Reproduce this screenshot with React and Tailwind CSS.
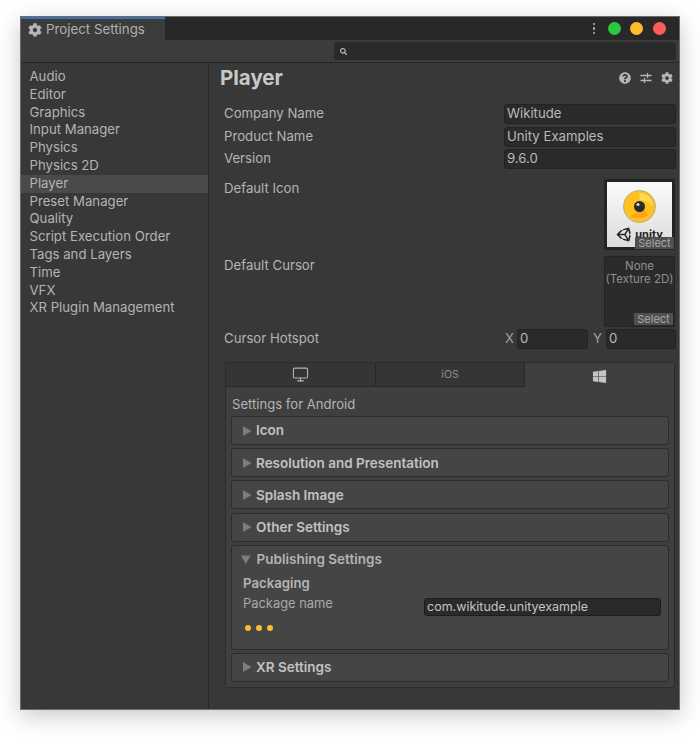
// App.jsx
import React from "react";
import { FaCog, FaQuestionCircle, FaSearch, FaWindows, FaUnity } from "react-icons/fa";
import { Monitor } from "lucide-react";

const sidebarItems = [
  "Audio",
  "Editor",
  "Graphics",
  "Input Manager",
  "Physics",
  "Physics 2D",
  "Player",
  "Preset Manager",
  "Quality",
  "Script Execution Order",
  "Tags and Layers",
  "Time",
  "VFX",
  "XR Plugin Management",
];

function Triangle({ open }) {
  return (
    <svg width="10" height="10" viewBox="0 0 10 10" className="mr-[4px] shrink-0">
      {open ? <path d="M0 1.5h9.5L4.75 10z" fill="#7d7d7d" /> : <path d="M1 0l8.5 5L1 10z" fill="#7d7d7d" />}
    </svg>
  );
}

function Section({ title }) {
  return (
    <div className="flex h-[29px] items-center rounded-[3px] border border-[#2c2c2c] bg-[#454545] pl-[10px]">
      <Triangle />
      <span className="text-[13.5px] font-semibold text-[#c2c2c2]">{title}</span>
    </div>
  );
}

function Field({ label, value }) {
  return (
    <div className="flex h-[22.5px] items-center">
      <span className="w-[284px] pl-[4px] text-[13.2px] text-[#b4b4b4]">{label}</span>
      <div className="flex h-[20px] w-[172px] items-center rounded-[3px] border border-[#232323] bg-[#2a2a2a] pl-[2px] text-[13.2px] text-[#b9b9b9]">
        {value}
      </div>
    </div>
  );
}

function SelectTag() {
  return (
    <div className="absolute right-[1px] bottom-[1px] flex h-[12px] w-[39px] items-center justify-center bg-[#505050] text-[11px] text-[#a8a8a8]">
      Select
    </div>
  );
}

function IconPreview() {
  return (
    <div className="relative h-[71px] w-[71px] rounded-[2px] bg-[#242424] p-[3px]">
      <div className="flex h-full w-full flex-col items-center overflow-hidden bg-gradient-to-b from-[#fafafa] to-[#dcdcdc] pt-[8px]">
        <svg width="33" height="33" viewBox="0 0 33 33" className="shrink-0">
          <circle cx="16.5" cy="16.5" r="16" fill="#ffc21c" stroke="#b8ab8a" />
          <path d="M16.5 3A13.5 13.5 0 0 1 30 16.5C26 12 22 10 16.5 10z" fill="#ffd95a" />
          <path d="M7 26c4 3 14 3 18-1-2-3-4-5-6-6-3 3-8 5-12 7z" fill="#f9a51a" />
          <circle cx="16.5" cy="16.5" r="5.5" fill="#2b2b2b" />
          <circle cx="15" cy="14.5" r="1.6" fill="#d9d9d9" />
        </svg>
        <div className="mt-[3px] flex h-[16px] items-center gap-[2px] text-[11px] leading-none font-bold text-[#222222]">
          <FaUnity className="text-[17px] text-[#222222]" />
          <span>unity</span>
        </div>
      </div>
      <SelectTag />
    </div>
  );
}

function CursorPreview() {
  return (
    <div className="relative h-[71px] w-[71px] rounded-[2px] border border-[#232323] bg-[#2b2b2b] pt-[3px] text-center text-[11.5px] leading-[13px] text-[#8f8f8f]">
      None
      <br />
      (Texture 2D)
      <SelectTag />
    </div>
  );
}

function SmallInput({ value, width }) {
  return (
    <div className={`flex h-[20px] items-center rounded-[3px] border border-[#232323] bg-[#2a2a2a] pl-[2px] text-[13.2px] text-[#b9b9b9] ${width}`}>
      {value}
    </div>
  );
}

export default function App() {
  return (
    <div className="min-h-[742px] bg-white pt-[16px] pl-[20px] [font-family:Inter,sans-serif]">
      <div className="flex h-[694px] w-[660px] flex-col border border-[#6b6b6b] bg-[#383838] shadow-[0_6px_22px_rgba(0,0,0,0.22)]">
        {/* title bar */}
        <div className="flex h-[23px] shrink-0 items-stretch bg-[#282828]">
          <div className="flex w-[144px] items-center gap-[4px] border-t-2 border-[#3a72b0] bg-[#3c3c3c] pt-[1px] pl-[7px] text-[13.3px] text-[#b0b0b0]">
            <FaCog className="text-[14px] text-[#b5b5b5]" />
            Project Settings
          </div>
          <div className="ml-auto flex items-center pr-[13px]">
            <div className="mr-[13px] flex flex-col gap-[2px]">
              <span className="h-[2.5px] w-[2.5px] rounded-full bg-[#b0b0b0]" />
              <span className="h-[2.5px] w-[2.5px] rounded-full bg-[#b0b0b0]" />
              <span className="h-[2.5px] w-[2.5px] rounded-full bg-[#b0b0b0]" />
            </div>
            <span className="h-[13px] w-[13px] rounded-full bg-[#2bc840]" />
            <span className="ml-[9px] h-[13px] w-[13px] rounded-full bg-[#fdbc2c]" />
            <span className="ml-[10px] h-[13px] w-[13px] rounded-full bg-[#fc5b57]" />
          </div>
        </div>

        {/* toolbar */}
        <div className="flex h-[23px] shrink-0 items-center justify-end border-b border-[#252525] bg-[#3c3c3c] pr-[3px]">
          <div className="flex h-[18px] w-[342px] items-center rounded-[3px] bg-[#2a2a2a] pl-[6px]">
            <FaSearch className="text-[7px] text-[#c4c4c4]" />
          </div>
        </div>

        <div className="flex min-h-0 flex-1">
          {/* sidebar */}
          <div className="w-[188px] shrink-0 border-r border-[#252525] pt-[5px]">
            {sidebarItems.map((item) => (
              <div
                key={item}
                className={`flex h-[17.8px] items-center pl-[8.5px] text-[13.2px] text-[#b4b4b4] ${item === "Player" ? "bg-[#4a4a4a]" : ""}`}
              >
                {item}
              </div>
            ))}
          </div>

          {/* main panel */}
          <div className="min-w-0 flex-1 pr-[3px] pl-[11px]">
            <div className="flex h-[30px] items-center justify-between pr-[3px]">
              <h1 className="text-[20.5px] font-bold text-[#c8c8c8]">Player</h1>
              <div className="flex items-center gap-[9px] text-[#b5b5b5]">
                <FaQuestionCircle className="text-[12px]" />
                <svg width="12" height="12" viewBox="0 0 12 12" fill="none" stroke="#b5b5b5" strokeWidth="1.3">
                  <path d="M0.5 3.5h11M0.5 8.5h11" />
                  <path d="M7.5 1v5M4.5 6v5" />
                </svg>
                <FaCog className="text-[12px]" />
              </div>
            </div>

            <div className="mt-[10px]">
              <Field label="Company Name" value="Wikitude" />
              <Field label="Product Name" value="Unity Examples" />
              <Field label="Version" value="9.6.0" />
            </div>

            <div className="mt-[8.5px] flex h-[71px] justify-between pr-[1px]">
              <span className="pl-[4px] text-[13.2px] text-[#b4b4b4]">Default Icon</span>
              <IconPreview />
            </div>
            <div className="mt-[6px] flex h-[71px] justify-between pr-[1px]">
              <span className="pl-[4px] text-[13.2px] text-[#b4b4b4]">Default Cursor</span>
              <CursorPreview />
            </div>

            <div className="mt-[2px] flex h-[20px] items-center text-[13.2px] text-[#b4b4b4]">
              <span className="w-[285px] pl-[4px]">Cursor Hotspot</span>
              <span className="w-[12px] text-[#a0a0a0]">X</span>
              <SmallInput value="0" width="w-[71px]" />
              <span className="ml-[5px] w-[13px] text-[#a0a0a0]">Y</span>
              <SmallInput value="0" width="w-[70px]" />
            </div>

            {/* platform tabs */}
            <div className="mt-[13px] ml-[5px] w-[450px] rounded-[2px] border border-[#2c2c2c] bg-[#3f3f3f] pb-[5px]">
              <div className="flex h-[24px] items-stretch">
                <div className="flex flex-1 items-center justify-center border-r border-b border-[#272727] bg-[#353535]">
                  <Monitor size={17} strokeWidth={1.5} className="text-[#b5b5b5]" />
                </div>
                <div className="flex flex-1 items-center justify-center border-r border-b border-[#272727] bg-[#353535] text-[10.5px] text-[#8f8f8f]">
                  iOS
                </div>
                <div className="flex flex-1 items-center justify-center text-[#c4c4c4]">
                  <FaWindows className="mt-[3px] text-[15px]" />
                </div>
              </div>

              <div className="px-[5px]">
                <div className="flex h-[29px] items-center pt-[7px] pl-[1px] text-[13.1px] text-[#b4b4b4]">Settings for Android</div>
                <div className="flex flex-col gap-[3.2px]">
                  <Section title="Icon" />
                  <Section title="Resolution and Presentation" />
                  <Section title="Splash Image" />
                  <Section title="Other Settings" />
                  <div className="h-[105px] rounded-[3px] border border-[#2c2c2c] bg-[#454545]">
                    <div className="flex h-[27px] items-center pl-[8.5px]">
                      <Triangle open />
                      <span className="ml-[2px] text-[13.5px] font-semibold text-[#b4b4b4]">Publishing Settings</span>
                    </div>
                    <div className="mt-[1.5px] pl-[11px] text-[13.2px] leading-[18px] font-semibold text-[#b4b4b4]">Packaging</div>
                    <div className="mt-[2px] flex items-start pl-[11px]">
                      <span className="w-[181px] text-[12.9px] leading-[20px] text-[#a8a8a8]">Package name</span>
                      <div className="mt-[4px] flex h-[18px] w-[237px] items-center rounded-[3px] border border-[#1e1e1e] bg-[#2a2a2a] pl-[2px] text-[12.5px] text-[#c4c4c4]">
                        com.wikitude.unityexample
                      </div>
                    </div>
                    <div className="mt-[9px] flex gap-[5px] pl-[13px]">
                      <span className="h-[6px] w-[6px] rounded-full bg-[#fdbc2c]" />
                      <span className="h-[6px] w-[6px] rounded-full bg-[#fdbc2c]" />
                      <span className="h-[6px] w-[6px] rounded-full bg-[#fdbc2c]" />
                    </div>
                  </div>
                  <Section title="XR Settings" />
                </div>
              </div>
            </div>
          </div>
        </div>
      </div>
    </div>
  );
}
